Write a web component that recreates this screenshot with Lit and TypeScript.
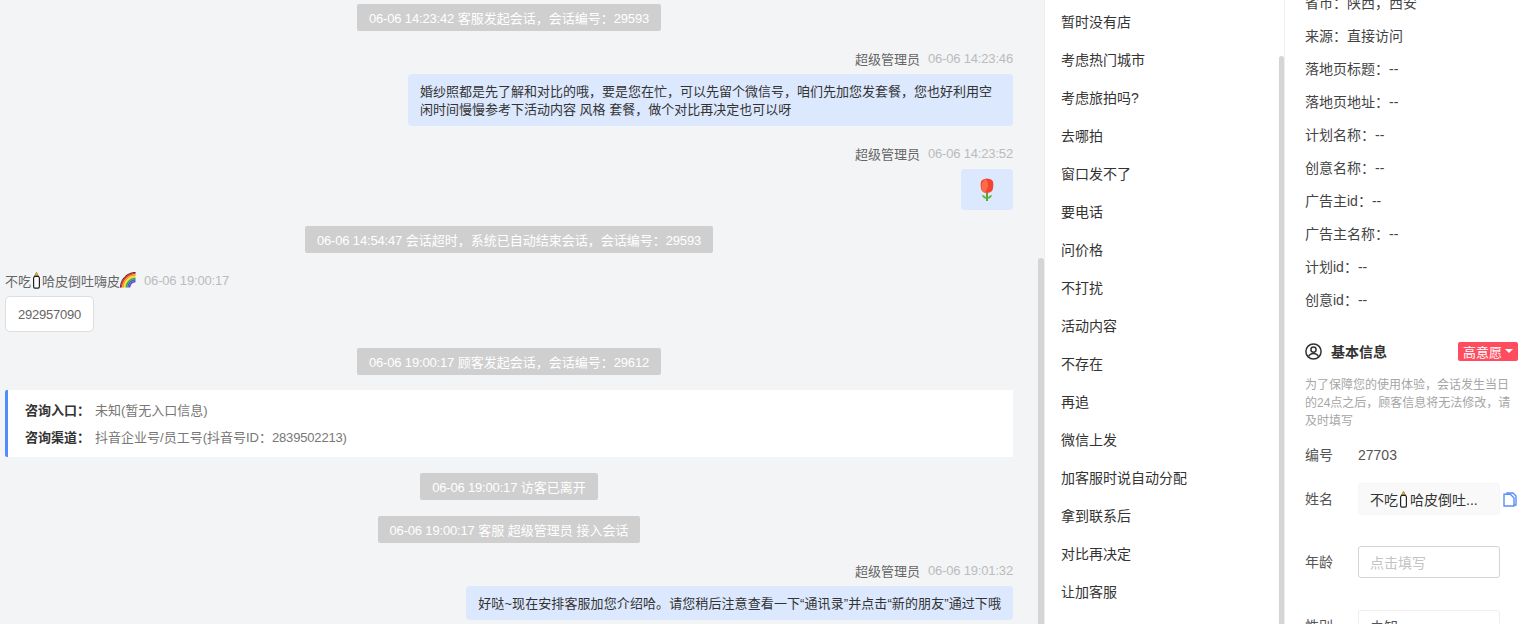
import { LitElement, html, css } from "lit";
import { customElement } from "lit/decorators.js";

const quick = ["暂时没有店","考虑热门城市","考虑旅拍吗?","去哪拍","窗口发不了","要电话","问价格","不打扰","活动内容","不存在","再追","微信上发","加客服时说自动分配","拿到联系后","对比再决定","让加客服"];
const meta = ["省市：陕西，西安","来源：直接访问","落地页标题：--","落地页地址：--","计划名称：--","创意名称：--","广告主id：--","广告主名称：--","计划id：--","创意id：--"];

const bottle = html`<svg class="bottle" width="7" height="17" viewBox="0 0 7 17" fill="#fff" stroke="#222" stroke-width="1.2"><path d="M3.5 .6c.7 0 1 .8 1 1.8l1 1.4H1.5l1-1.4c0-1 .3-1.8 1-1.8z" fill="#e2b23a" stroke="#8a6d20" stroke-width=".6"/><path d="M1.6 4.4h3.8c.6.4 1 1 1 1.8v8.4c0 .9-.6 1.6-1.4 1.6H2c-.8 0-1.4-.7-1.4-1.6V6.200c0-.8.4-1.4 1-1.800z"/></svg>`;

const rainbow = html`<svg class="rainbow" width="16" height="16" viewBox="0 0 16 16" fill="none"><path d="M.5 15.500C.5 7 7 .5 15.500.5" stroke="#222" stroke-width="1"/><path d="M1.500 15.500C1.500 7.700 7.700 1.500 15.500 1.500" stroke="#e5322d" stroke-width="1.600"/><path d="M3.100 15.500C3.100 8.600 8.600 3.100 15.500 3.100" stroke="#f59a1c" stroke-width="1.600"/><path d="M4.700 15.500C4.700 9.500 9.500 4.700 15.500 4.700" stroke="#f8e02c" stroke-width="1.600"/><path d="M6.300 15.500C6.300 10.400 10.400 6.300 15.500 6.300" stroke="#3fae3a" stroke-width="1.600"/><path d="M7.900 15.500C7.900 11.300 11.300 7.900 15.500 7.900" stroke="#2f6fd8" stroke-width="1.600"/><path d="M9.500 15.500C9.500 12.200 12.200 9.500 15.500 9.500" stroke="#7a3fb0" stroke-width="1.600"/></svg>`;

const tulip = html`<svg width="14" height="23" viewBox="0 0 14 23"><path d="M7 14v9" stroke="#5aa637" stroke-width="2" fill="none"/><path d="M7 21c-1-2.500-2.800-3.800-5-4 .4 2.400 2.500 4 5 4zM7 21c1-2.500 2.800-3.800 5-4-.4 2.400-2.500 4-5 4z" fill="#6cb33f"/><path d="M1 3.600C2.400 1.600 4 .6 5 1c.8-.7 2.800-.9 4 0 1.300-.3 3 .6 4 2.600.7 3.500.4 7-1 9.400-1.200 1.300-3 1.900-5 1.900s-3.800-.6-5-1.900C.6 10.600.300 7 1 3.600z" fill="#f4432f"/><path d="M5 1c2 1 3.500 3.500 3 7-.3 2-1.500 4.500-3.500 6.500C2.600 14 1.700 12.500 1.500 9 1.300 6 2.500 3 5 1z" fill="#fb6a4a"/></svg>`;

@customElement("app-root")
export class AppRoot extends LitElement {
  static styles = css`
    :host { display: block; height: 624px; overflow: hidden; font-family: "Liberation Sans", "Noto Sans CJK SC", sans-serif; font-size: 13px; color: #333; background: #fff; }
    .page { display: flex; height: 624px; overflow: hidden; }
    .chat { position: relative; flex: none; box-sizing: border-box; width: 1045px; background: #f3f4f6; padding: 4px 31px 0 5px; display: flex; flex-direction: column; overflow: hidden; border-right: 1px solid #eee; }
    .sys { align-self: center; height: 27px; line-height: 29px; padding: 0 12px; background: #cfcfcf; color: #fff; border-radius: 2px; margin-bottom: 16px; white-space: nowrap; }
    .n { letter-spacing: -0.17px; }
    .msg { display: flex; flex-direction: column; margin: 3px 0 16px; flex: none; }
    .msg.me { align-items: flex-end; }
    .who { box-sizing: border-box; height: 16px; margin-bottom: 8px; color: #666; white-space: nowrap; display: flex; align-items: center; }
    .time { color: #bbb; margin-left: 8px; }
    .bubble { box-sizing: border-box; border-radius: 4px; padding: 9px 12px 7px; line-height: 18px; background: #dce8fd; color: #333; }
    .wide { width: 605px; }
    .flower { width: 52px; height: 41px; display: flex; align-items: center; justify-content: center; padding: 0; }
    .pw { display: flex; }
    .plain { box-sizing: border-box; width: 89px; text-align: center; background: #fff; border: 1px solid #ddd; color: #666; height: 36px; line-height: 36px; border-radius: 5px; letter-spacing: -0.25px; }
    .last { letter-spacing: 0.09px; }
    .card { height: 67px; box-sizing: border-box; margin: -1px 0 16px; background: #fff; border-left: 3px solid #4f8dff; padding: 12px 17px; display: flex; flex-direction: column; gap: 9px; flex: none; border-radius: 2px 0 0 2px; }
    .card div { line-height: 18px; color: #777; }
    .card b { color: #333; font-weight: 700; margin-right: 5px; }
    .bar { position: absolute; right: 0; bottom: 0; width: 6px; background: #d5d5d5; border-radius: 3px 3px 0 0; }
    .chat .bar { top: 258px; }
    .mid { position: relative; flex: none; box-sizing: border-box; width: 240px; padding: 3px 0 0 16px; border-right: 1px solid #eee; overflow: hidden; font-size: 14px; }
    .mid .bar { top: 56px; width: 5px; }
    .q { height: 38px; line-height: 38px; color: #333; white-space: nowrap; }
    .side { flex: 1; min-width: 0; padding: 0 19px 0 20px; margin-top: -13px; display: flex; flex-direction: column; font-size: 14px; }
    .m { height: 33px; line-height: 33px; flex: none; color: #444; white-space: nowrap; }
    .head { display: flex; align-items: center; margin-top: 24px; height: 20px; flex: none; }
    .head svg { margin-right: 9px; }
    .head strong { flex: 1; font-weight: 700; color: #333; }
    .tag { width: 60px; height: 19px; font-size: 13px; background: #ff4d5f; color: #fff; border-radius: 2px; padding-left: 5px; box-sizing: border-box; display: flex; align-items: center; }
    .tri { width: 0; height: 0; margin-left: 3px; border: 4px solid transparent; border-top: 4px solid #fff; border-bottom: 0; }
    .hint { margin: 15px 0 0; font-size: 12px; line-height: 18px; color: #a6a6a6; flex: none; }
    .row { display: flex; align-items: center; flex: none; color: #555; }
    .row label { width: 53px; flex: none; padding-bottom: 2px; }
    .num { margin-top: 15px; height: 20px; }
    .field { box-sizing: border-box; width: 142px; height: 32px; padding: 0 11px; border-radius: 3px; white-space: nowrap; overflow: hidden; display: flex; align-items: center; }
    .filled { background: #f9f9f9; border: 1px solid #f6f6f6; color: #333; }
    .empty { border: 1px solid #d5d5d5; color: #c4c4c4; }
    .sel { border: 1px solid #eee; color: #555; }
    .r1 { margin-top: 18px; }
    .r2 { margin-top: 31px; }
    .r3 { margin-top: 32px; }
    .copy { margin-left: 3px; flex: none; }
    .bottle { flex: none; margin: 0 2px 0 2px; }
    .field .bottle { margin: 0 3px 0 2px; }
    .rainbow { flex: none; }
  `;

  sys(t: string, rest: string) {
    return html`<div class="sys"><span class="n">${t}</span> ${rest}</div>`;
  }

  render() {
    return html`<div class="page">
      <section class="chat">
        <div class="sys"><span class="n">06-06 14:23:42</span> 客服发起会话，会话编号：<span class="n">29593</span></div>
        <div class="msg me">
          <div class="who">超级管理员<span class="time n">06-06 14:23:46</span></div>
          <div class="bubble wide">婚纱照都是先了解和对比的哦，要是您在忙，可以先留个微信号，咱们先加您发套餐，您也好利用空闲时间慢慢参考下活动内容 风格 套餐，做个对比再决定也可以呀</div>
        </div>
        <div class="msg me">
          <div class="who">超级管理员<span class="time n">06-06 14:23:52</span></div>
          <div class="bubble flower">${tulip}</div>
        </div>
        <div class="sys"><span class="n">06-06 14:54:47</span> 会话超时，系统已自动结束会话，会话编号：<span class="n">29593</span></div>
        <div class="msg">
          <div class="who">不吃${bottle}哈皮倒吐嗨皮${rainbow}<span class="time n">06-06 19:00:17</span></div>
          <div class="pw"><span class="plain">292957090</span></div>
        </div>
        <div class="sys"><span class="n">06-06 19:00:17</span> 顾客发起会话，会话编号：<span class="n">29612</span></div>
        <div class="card">
          <div><b>咨询入口：</b>未知(暂无入口信息)</div>
          <div><b>咨询渠道：</b>抖音企业号/员工号(抖音号ID：<span class="n">2839502213</span>)</div>
        </div>
        ${this.sys("06-06 19:00:17", "访客已离开")}
        ${this.sys("06-06 19:00:17", "客服 超级管理员 接入会话")}
        <div class="msg me">
          <div class="who">超级管理员<span class="time n">06-06 19:01:32</span></div>
          <div class="bubble last">好哒~现在安排客服加您介绍哈。请您稍后注意查看一下“通讯录”并点击“新的朋友”通过下哦</div>
        </div>
        <div class="bar"></div>
      </section>
      <section class="mid">
        ${quick.map((q) => html`<div class="q">${q}</div>`)}
        <div class="bar"></div>
      </section>
      <section class="side">
        ${meta.map((m) => html`<div class="m">${m}</div>`)}
        <div class="head">
          <svg width="17" height="17" viewBox="0 0 17 17" fill="none" stroke="#333" stroke-width="1.5"><circle cx="8.500" cy="8.500" r="7.600"/><circle cx="8.500" cy="6.600" r="2.600"/><path d="M3.600 13.600c.8-2.200 2.600-3.200 4.900-3.200s4.100 1 4.900 3.200"/></svg>
          <strong>基本信息</strong>
          <span class="tag">高意愿<i class="tri"></i></span>
        </div>
        <p class="hint">为了保障您的使用体验，会话发生当日的24点之后，顾客信息将无法修改，请及时填写</p>
        <div class="row num"><label>编号</label><span>27703</span></div>
        <div class="row r1"><label>姓名</label><div class="field filled">不吃${bottle}哈皮倒吐...</div>
          <svg class="copy" width="14" height="15" viewBox="0 0 14 15" fill="#fff" stroke="#5b8ff9" stroke-width="1.4"><path d="M4 2V1h6l3 3v9h-2"/><path d="M1 2.200h6.400L11 6v8H1z"/></svg>
        </div>
        <div class="row r2"><label>年龄</label><div class="field empty">点击填写</div></div>
        <div class="row r3"><label>性别</label><div class="field sel">未知</div></div>
      </section>
    </div>`;
  }
}
